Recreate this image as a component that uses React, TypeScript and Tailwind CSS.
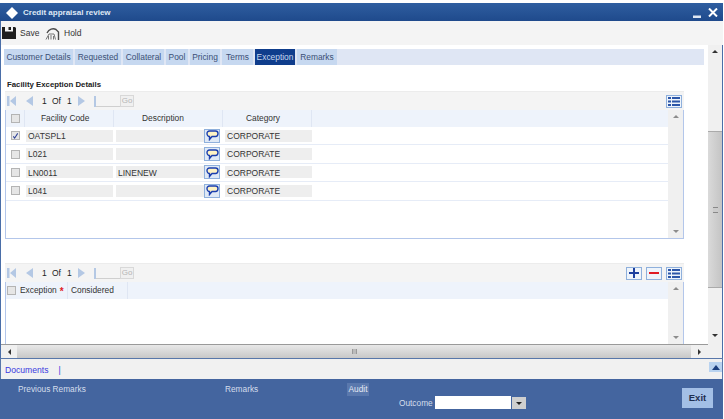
const font = { fontFamily: '"Liberation Sans", Arial, sans-serif' };

const rows = [
  { code: "OATSPL1", desc: "", checked: true },
  { code: "L021", desc: "", checked: false },
  { code: "LN0011", desc: "LINENEW", checked: false },
  { code: "L041", desc: "", checked: false },
];

const tabs = [
  { label: "Customer Details", w: "w-[69px]" },
  { label: "Requested", w: "w-[46px]" },
  { label: "Collateral", w: "w-[41px]" },
  { label: "Pool", w: "w-[22px]" },
  { label: "Pricing", w: "w-[30px]" },
  { label: "Terms", w: "w-[31px]" },
  { label: "Exception", w: "w-[40px]" },
  { label: "Remarks", w: "w-[40px]" },
];

const Check = ({ checked = false }: { checked?: boolean }) => (
  <span className="flex h-[9px] w-[9px] items-center justify-center border border-[#b4b4b4] bg-[#e6e6e6]">
    {checked && (
      <svg className="h-[8px] w-[8px]" viewBox="0 0 8 8" fill="none" stroke="#2b3f96" strokeWidth={1.2}>
        <path d="M1.5 4.5 3 6.5 6.5 1" />
      </svg>
    )}
  </span>
);

const ListIcon = () => (
  <span className="flex h-[13px] w-[16px] items-center justify-center border border-[#8fb0dc] bg-[#eef4fb]">
    <svg className="h-[9px] w-[12px]" viewBox="0 0 12 9" fill="#2c56a8">
      <path d="M0 0h3v2H0zM4 0h8v2H4zM0 3.5h3v2H0zM4 3.5h8v2H4zM0 7h3v2H0zM4 7h8v2H4z" />
    </svg>
  </span>
);

const Bubble = () => (
  <span className="flex h-[14px] w-[16px] items-center justify-center border border-[#8fb0dc] bg-[#dfe9f6]">
    <svg className="h-[11px] w-[13px]" viewBox="0 0 13 11" fill="#fff3c4" stroke="#1c3fae" strokeWidth={1.4}>
      <path d="M3.5 1h6C11 1 12 2 12 3.5S11 6.5 9.5 6.5H6L3.5 9.5V6.5C2 6.5 1 5 1 3.5S2 1 3.5 1z" />
    </svg>
  </span>
);

const Pager = ({ children }: { children?: React.ReactNode }) => (
  <div className="flex h-[19px] items-center border-t border-[#ececec] bg-[#f4f4f4] pl-[2px] pr-[2px] text-[8.5px] text-[#222]">
    <svg className="h-[10px] w-[9px]" viewBox="0 0 9 10" fill="#b4c8e4">
      <path d="M0 0h2.5v10H0zM9 0v10L3 5z" />
    </svg>
    <svg className="ml-[9px] h-[10px] w-[8px]" viewBox="0 0 8 10" fill="#b4c8e4">
      <path d="M8 0v10L1 5z" />
    </svg>
    <span className="ml-[9px] w-[5px]">1</span>
    <span className="ml-[5px] w-[10px]">Of</span>
    <span className="ml-[5px] w-[5px]">1</span>
    <svg className="ml-[6px] h-[10px] w-[8px]" viewBox="0 0 8 10" fill="#b4c8e4">
      <path d="M0 0v10L7 5z" />
    </svg>
    <span className="ml-[8px] h-[11px] w-[2px] bg-[#b4c8e4]" />
    <span className="mt-[10px] h-px w-[24px] bg-[#cfcfcf]" />
    <span className="flex h-[12px] w-[14px] items-center justify-center border border-[#d8d8d8] bg-[#f0f0f0] text-[8px] text-[#b5b5b5]">
      Go
    </span>
    <div className="ml-auto flex items-center gap-[4px]">{children}</div>
  </div>
);

const ScrollV = () => (
  <div className="flex w-[15px] flex-col items-center justify-between bg-[#f0f0f0] py-[5px]">
    <span className="h-0 w-0 border-x-[3px] border-b-[3px] border-x-transparent border-b-[#8c8c8c]" />
    <span className="h-0 w-0 border-x-[3px] border-t-[3px] border-x-transparent border-t-[#8c8c8c]" />
  </div>
);

const Field = ({ w, children }: { w: string; children?: React.ReactNode }) => (
  <span className={`flex h-[12px] items-center bg-[#eeeeee] pl-[2px] pt-px text-[8.5px] text-[#333] ${w}`}>{children}</span>
);

export default function App() {
  return (
    <div style={font} className="flex h-[419px] w-[724px] flex-col overflow-hidden bg-white pr-px pt-[3px]">
      <div className="flex h-[18px] items-center bg-gradient-to-b from-[#2f5ea0] to-[#1f4a8c] pl-[5px] pr-[5px] pt-px">
        <svg className="h-[14px] w-[14px]" viewBox="0 0 14 14" fill="#fff">
          <path d="M7 1l6 6-6 6-6-6z" />
        </svg>
        <span className="ml-[4px] text-[8px] font-bold text-[#dfe8f5]">Credit appraisal review</span>
        <svg className="ml-auto mt-[3px] h-[8px] w-[8px]" viewBox="0 0 8 8" fill="#dfe7f3">
          <path d="M0 5.5h8V8H0z" />
        </svg>
        <svg className="ml-[7px] h-[9px] w-[10px]" viewBox="0 0 10 9" stroke="#fff" strokeWidth={2}>
          <path d="M1 0.5 9 8.5M9 0.5 1 8.5" />
        </svg>
      </div>

      <div className="flex h-[24px] items-center border-l border-[#4a6ea8] bg-[#f4f4f4] pl-px text-[8.5px] text-[#333]">
        <svg className="h-[12px] w-[14px]" viewBox="0 0 14 12" fill="#1e1e1e">
          <path d="M0 0h3v4.5h8V0h2l1 1v11H0zM3 7.5h8V12H3zM6.5 0h2.5v3H6.5z" />
        </svg>
        <span className="ml-[4px] w-[17px]">Save</span>
        <svg className="ml-[8px] h-[13px] w-[15px]" viewBox="0 0 15 13" fill="none" stroke="#4a4a4a">
          <path d="M2 6C4 2 8 1 11 2.5L13.5 5v8" strokeWidth={1.4} />
          <path d="M1 12.5 4 7h5l1.5 5.5M3.5 12.5V9M6 12.5V8M8.5 12.5V9" stroke="#777" />
        </svg>
        <span className="ml-[4px]">Hold</span>
      </div>

      <div className="flex min-h-0 flex-1 border-l border-[#4a6ea8]">
        <div className="flex min-w-0 flex-1 flex-col">
          <div className="flex min-h-0 flex-1 flex-col pl-[3px] pt-[4px]">
            <div className="flex h-[16px] w-[700px] gap-[2px] bg-[#dfe6f4] text-[8.4px]">
              {tabs.map((t) => (
                <span
                  key={t.label}
                  className={`flex items-center justify-center whitespace-nowrap pt-px ${t.w} ${
                    t.label === "Exception" ? "bg-[#0f3d8c] text-[#c6d6ee]" : "bg-[#c6d8f0] text-[#3a4f75]"
                  }`}
                >
                  {t.label}
                </span>
              ))}
            </div>

            <div className="mt-[14px] pl-[3px] text-[7.8px] font-bold leading-[11px] text-[#222]">Facility Exception Details</div>

            <div className="ml-px mt-px w-[679px]">
              <Pager>
                <ListIcon />
              </Pager>
              <div className="flex h-[129px] border-x border-b border-[#b3c6ea]">
                <div className="min-w-0 flex-1">
                  <div className="flex h-[17px] items-center bg-[#eef3fb] text-[8.4px] text-[#333]">
                    <span className="flex h-full w-[19px] items-center justify-center border-r border-[#dfe6f3]">
                      <Check />
                    </span>
                    <span className="flex h-full w-[89px] items-center border-r border-[#dfe6f3] pl-[16px]">Facility Code</span>
                    <span className="flex h-full w-[109px] items-center border-r border-[#dfe6f3] pl-[28px]">Description</span>
                    <span className="flex h-full w-[89px] items-center border-r border-[#dfe6f3] pl-[23px]">Category</span>
                  </div>
                  {rows.map((r) => (
                    <div key={r.code} className="flex h-[18.4px] items-center border-b border-[#e6ecf7]">
                      <span className="flex w-[19px] justify-center">
                        <Check checked={r.checked} />
                      </span>
                      <span className="ml-px">
                        <Field w="w-[87px]">{r.code}</Field>
                      </span>
                      <span className="ml-[3px]">
                        <Field w="w-[88px]">{r.desc}</Field>
                      </span>
                      <Bubble />
                      <span className="ml-[5px]">
                        <Field w="w-[87px]">CORPORATE</Field>
                      </span>
                    </div>
                  ))}
                </div>
                <ScrollV />
              </div>
            </div>

            <div className="ml-px mt-[24px] flex min-h-0 w-[679px] flex-1 flex-col">
              <Pager>
                <span className="flex h-[13px] w-[16px] items-center justify-center border border-[#8fb0dc] bg-[#eef4fb]">
                  <svg className="h-[10px] w-[10px]" viewBox="0 0 10 10" fill="#1c3f9e">
                    <path d="M4 0h2v4h4v2H6v4H4V6H0V4h4z" />
                  </svg>
                </span>
                <span className="flex h-[13px] w-[16px] items-center justify-center border border-[#8fb0dc] bg-[#eef4fb]">
                  <span className="h-[2px] w-[10px] bg-[#e01b24]" />
                </span>
                <ListIcon />
              </Pager>
              <div className="flex min-h-0 flex-1 border-x border-[#b3c6ea]">
                <div className="min-w-0 flex-1">
                  <div className="flex h-[17px] items-center bg-[#eef3fb] text-[8.4px] text-[#333]">
                    <span className="flex w-[10px] justify-end">
                      <Check />
                    </span>
                    <span className="ml-[4px] flex h-full w-[48px] items-center border-r border-[#dfe6f3]">
                      Exception
                      <span className="ml-[3px] mt-[3px] text-[10px] font-bold leading-none text-[#e01b24]">*</span>
                    </span>
                    <span className="flex h-full w-[60px] items-center border-r border-[#dfe6f3] pl-[3px]">Considered</span>
                  </div>
                </div>
                <ScrollV />
              </div>
            </div>
          </div>

          <div className="flex h-[14px] items-center border-t border-[#9a9a9a] bg-[#dcdcdc]">
            <span className="flex h-[13px] w-[16px] items-center justify-center bg-[#f0f0f0]">
              <span className="h-0 w-0 border-y-[3px] border-r-[3px] border-y-transparent border-r-[#333]" />
            </span>
            <span className="flex h-[13px] flex-1 items-center justify-center bg-gradient-to-b from-[#e8e8e8] to-[#c8c8c8]">
              <span className="h-[5px] w-[5px] border-x border-[#999] bg-[#bbb]" />
            </span>
            <span className="flex h-[13px] w-[17px] items-center justify-center bg-[#f0f0f0]">
              <span className="h-0 w-0 border-y-[3px] border-l-[3px] border-y-transparent border-l-[#333]" />
            </span>
          </div>
        </div>

        <div className="flex w-[15px] flex-col border-r border-[#4a6ea8] bg-[#f0f0f0]">
          <div className="flex h-[86px] justify-center pt-[5px]">
            <span className="h-0 w-0 border-x-[3px] border-b-[3px] border-x-transparent border-b-[#333]" />
          </div>
          <div className="flex h-[157px] items-center justify-center border-y border-[#aaa] bg-gradient-to-r from-[#dadada] to-[#c4c4c4]">
            <span className="h-[6px] w-[5px] border-y border-[#888] bg-[#ccc]" />
          </div>
          <div className="flex flex-1 items-end justify-center pb-[21px]">
            <span className="h-0 w-0 border-x-[3px] border-t-[3px] border-x-transparent border-t-[#333]" />
          </div>
        </div>
      </div>

      <div className="flex h-[21px] items-center border-x border-t border-[#5877aa] bg-[#f1f1f1] pl-[4px] pt-[2px] text-[8.6px] text-[#3a3ae0]">
        <span>Documents</span>
        <span className="ml-[10px]">|</span>
        <span className="mb-[6px] ml-auto flex h-[10px] w-[13px] items-center justify-center bg-[#b9d3f0]">
          <span className="h-0 w-0 border-x-[4px] border-b-[5px] border-x-transparent border-b-[#1c3f7e]" />
        </span>
      </div>

      <div className="flex h-[40px] bg-[#44659f] text-[8.3px] text-[#d5deec]">
        <span className="ml-[18px] mt-[4px] w-[207px]">Previous Remarks</span>
        <span className="mt-[4px] w-[122px]">Remarks</span>
        <span className="mt-[4px] flex h-[13px] w-[22px] items-center justify-center bg-[#5a78ad] text-[#e4eaf4]">
          Audit
        </span>
        <span className="ml-[30px] mt-[18px] h-[13px] w-[33px]">Outcome</span>
        <span className="ml-[3px] mt-[17px] h-[13px] w-[76px] bg-white" />
        <span className="ml-px mt-[18px] flex h-[12px] w-[14px] items-center justify-center bg-[#cfcfcf]">
          <span className="h-0 w-0 border-x-[3px] border-t-[3px] border-x-transparent border-t-[#222]" />
        </span>
        <span className="ml-auto mr-[10px] mt-[9px] flex h-[20px] w-[31px] items-center justify-center bg-[#a3bfe6] text-[9.5px] font-bold text-[#1f2f4f]">
          Exit
        </span>
      </div>
    </div>
  );
}
